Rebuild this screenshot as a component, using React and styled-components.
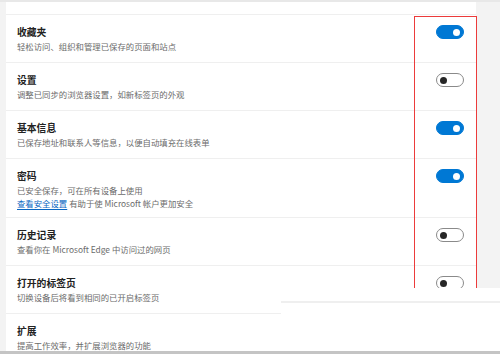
import React from "react";
import styled, { createGlobalStyle } from "styled-components";

const GlobalStyle = createGlobalStyle`
  html, body {
    margin: 0;
    padding: 0;
    background: #f3f3f3;
  }
  body {
    font-family: "Noto Sans CJK SC", "Noto Sans", sans-serif;
  }
`;

const items = [
    { title: "收藏夹", desc: "轻松访问、组织和管理已保存的页面和站点", on: true },
    { title: "设置", desc: "调整已同步的浏览器设置，如新标签页的外观", on: false },
    { title: "基本信息", desc: "已保存地址和联系人等信息，以便自动填充在线表单", on: true },
    {
        title: "密码",
        desc: "已安全保存，可在所有设备上使用",
        link: "查看安全设置",
        linkNote: "有助于使 Microsoft 帐户更加安全",
        on: true,
    },
    { title: "历史记录", desc: "查看你在 Microsoft Edge 中访问过的网页", on: false },
    { title: "打开的标签页", desc: "切换设备后将看到相同的已开启标签页", on: false },
    { title: "扩展", desc: "提高工作效率，并扩展浏览器的功能", on: false },
];

const App = () => {
    return (
        <Screen>
            <GlobalStyle />
            <Viewport>
                <TopBand />
                <Card>
                    <CardHead />
                    {items.map((item, idx) => (
                        <Row key={idx} tall={!!item.link}>
                            <Texts>
                                <Title>{item.title}</Title>
                                <Desc>{item.desc}</Desc>
                                {item.link && (
                                    <Desc small>
                                        <Link>{item.link}</Link> {item.linkNote}
                                    </Desc>
                                )}
                            </Texts>
                            <Toggle on={item.on}>
                                <Knob on={item.on} />
                            </Toggle>
                        </Row>
                    ))}
                </Card>
                {/* 빨간 강조 박스 */}
                <Highlight />
                {/* 아래쪽에 겹친 흰 패널 */}
                <Overlay>
                    <OverlayLine />
                </Overlay>
            </Viewport>
            <BottomBar />
        </Screen>
    );
};

// style

const Screen = styled.div`
    width: 500px;
    height: 354px;
    display: flex;
    flex-direction: column;
    overflow: hidden;
    background: #f3f3f3;
`;

const Viewport = styled.div`
    position: relative;
    flex: 1;
    overflow: hidden;
    padding-left: 6px;
`;

const TopBand = styled.div`
    height: 2px;
    margin-left: -6px;
    background: #e8e8e8;
`;

const Card = styled.div`
    width: 470px;
    background: #ffffff;
`;

const CardHead = styled.div`
    height: 12px;
    border-bottom: 1px solid #efefef;
`;

const Row = styled.div`
    display: flex;
    align-items: flex-start;
    justify-content: space-between;
    padding: 10px 12px ${(p) => (p.tall ? "8px" : "9px")} 11px;
    border-bottom: 1px solid #efefef;
`;

const Texts = styled.div`
    display: flex;
    flex-direction: column;
`;

const Title = styled.div`
    font-size: 9.8px;
    line-height: 14px;
    font-weight: 700;
    color: #222222;
`;

const Desc = styled.div`
    font-size: 8.4px;
    line-height: ${(p) => (p.small ? "12px" : "14px")};
    color: #6b6b6b;
    white-space: nowrap;
`;

const Link = styled.span`
    color: #0a66c2;
    text-decoration: underline;
    text-underline-offset: 2px;
`;

const Toggle = styled.div`
    box-sizing: border-box;
    width: 28px;
    height: 14px;
    border-radius: 7px;
    display: flex;
    align-items: center;
    justify-content: ${(p) => (p.on ? "flex-end" : "flex-start")};
    padding: 0 3px;
    background: ${(p) => (p.on ? "#0078d4" : "#ffffff")};
    border: 1px solid ${(p) => (p.on ? "#0078d4" : "#8a8a8a")};
`;

const Knob = styled.div`
    width: 7px;
    height: 7px;
    border-radius: 50%;
    background: ${(p) => (p.on ? "#ffffff" : "#262626")};
`;

const Highlight = styled.div`
    position: absolute;
    left: 414px;
    top: 16px;
    width: 63px;
    height: 290px;
    box-sizing: border-box;
    border: 1.5px solid #ec3b3b;
`;

const Overlay = styled.div`
    position: absolute;
    left: 281px;
    top: 288px;
    right: 0;
    bottom: 0;
    background: #ffffff;
    padding-top: 13px;
`;

const OverlayLine = styled.div`
    height: 2px;
    background: #efefef;
`;

const BottomBar = styled.div`
    height: 3px;
    background: #c4c4c4;
`;

export default App;
